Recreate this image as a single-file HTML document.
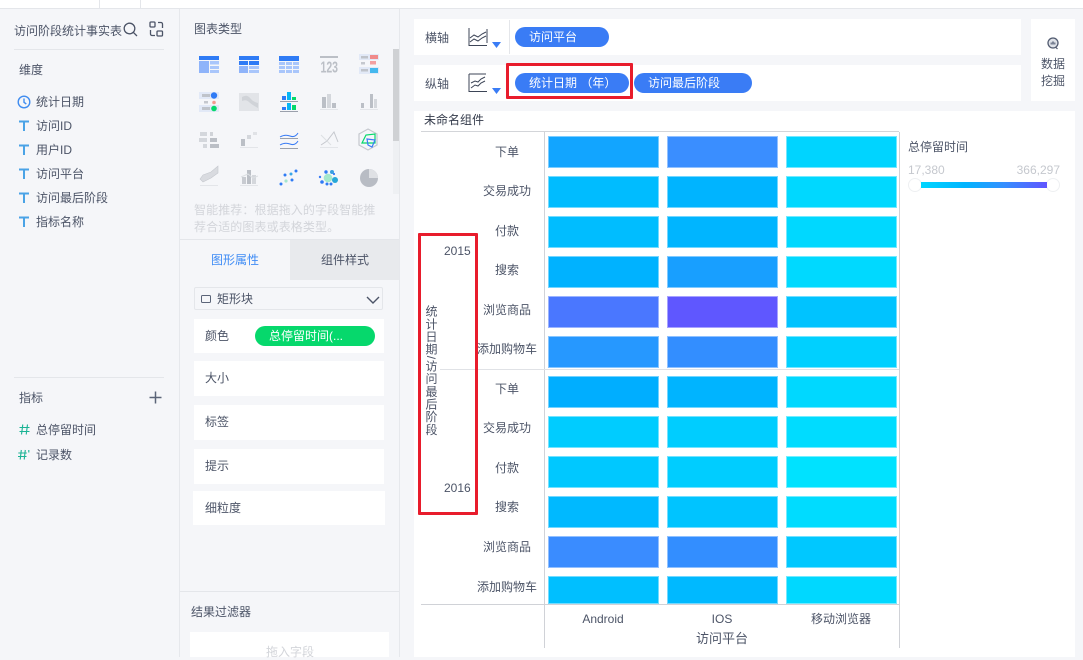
<!DOCTYPE html>
<html lang="zh"><head><meta charset="utf-8"><title>组件</title>
<style>
html,body{margin:0;padding:0}
body{position:relative;width:1083px;height:657px;overflow:hidden;background:#f5f6f9;font-family:"Liberation Sans","Noto Sans CJK SC",sans-serif;font-size:12px;color:#4c5467}
.t{position:absolute;white-space:nowrap;line-height:16px}
.c{position:absolute;white-space:nowrap;line-height:16px;text-align:center;transform:translateX(-50%)}
.b{position:absolute}
.w{position:absolute;background:#fff}
.p{position:absolute;height:20px;line-height:20px;border-radius:10px;background:#3a7cf5;color:#fff;white-space:nowrap;box-sizing:border-box;padding-left:14px}
.h{position:absolute;width:111px;height:32px;box-shadow:inset 0 0 0 1px rgba(255,255,255,.45)}
.x1{left:548px}.x2{left:667px}.x3{left:786px}
svg{position:absolute;overflow:visible}
</style></head><body>
<!-- top strip -->
<div class="w" style="left:0;top:0;width:1083px;height:8px"></div>
<div class="b" style="left:0;top:8px;width:1083px;height:1px;background:#e4e6ea"></div>
<div class="b" style="left:99px;top:0;width:1px;height:8px;background:#e4e6ea"></div>
<div class="b" style="left:140px;top:0;width:1px;height:8px;background:#e4e6ea"></div>

<!-- left panel -->
<div class="b" style="left:179px;top:9px;width:1px;height:648px;background:#e6e8ec"></div>
<span class="t" style="left:14px;top:23px">访问阶段统计事实表</span>
<svg style="left:122px;top:21px" width="16" height="16" viewBox="0 0 16 16" fill="none" stroke="#4c5467" stroke-width="1.3"><circle cx="7.5" cy="7.5" r="5.3"/><path d="M11.4 11.4L15 15"/></svg>
<svg style="left:149px;top:21px" width="15" height="16" viewBox="0 0 15 16" fill="none" stroke="#4c5467" stroke-width="1.3"><rect x="1" y="1" width="5" height="5" rx="1"/><rect x="8" y="10" width="5.5" height="5" rx="1"/><path d="M9 1.5h3a1.5 1.5 0 0 1 1.500 1.500v4M6 14.500H3a1.500 1.500 0 0 1-1.500-1.500V9"/></svg>
<div class="b" style="left:14px;top:49px;width:150px;height:1px;background:#e4e6ea"></div>
<span class="t" style="left:19px;top:62px">维度</span>
<svg style="left:17px;top:95px" width="14" height="14" viewBox="0 0 14 14" fill="none" stroke="#3f8cf0" stroke-width="1.400"><circle cx="7" cy="7" r="5.800"/><path d="M7 3.500V7.300L9.300 9"/></svg>
<span class="t" style="left:36px;top:94px">统计日期</span>
<svg style="left:18px;top:120px" width="12" height="12" viewBox="0 0 12 12"><path d="M1 1.500H11M6 1.500V11" stroke="#4aa3e6" stroke-width="2" fill="none"/></svg>
<span class="t" style="left:36px;top:118px">访问ID</span>
<svg style="left:18px;top:144px" width="12" height="12" viewBox="0 0 12 12"><path d="M1 1.500H11M6 1.500V11" stroke="#4aa3e6" stroke-width="2" fill="none"/></svg>
<span class="t" style="left:36px;top:142px">用户ID</span>
<svg style="left:18px;top:168px" width="12" height="12" viewBox="0 0 12 12"><path d="M1 1.500H11M6 1.500V11" stroke="#4aa3e6" stroke-width="2" fill="none"/></svg>
<span class="t" style="left:36px;top:166px">访问平台</span>
<svg style="left:18px;top:192px" width="12" height="12" viewBox="0 0 12 12"><path d="M1 1.500H11M6 1.500V11" stroke="#4aa3e6" stroke-width="2" fill="none"/></svg>
<span class="t" style="left:36px;top:190px">访问最后阶段</span>
<svg style="left:18px;top:216px" width="12" height="12" viewBox="0 0 12 12"><path d="M1 1.500H11M6 1.500V11" stroke="#4aa3e6" stroke-width="2" fill="none"/></svg>
<span class="t" style="left:36px;top:214px">指标名称</span>
<div class="b" style="left:14px;top:377px;width:150px;height:1px;background:#e4e6ea"></div>
<span class="t" style="left:19px;top:390px">指标</span>
<svg style="left:149px;top:391px" width="13" height="13" viewBox="0 0 13 13"><path d="M6.500 0.500V12.500M0.500 6.500H12.500" stroke="#5b6478" stroke-width="1.500"/></svg>
<svg style="left:19px;top:424px" width="11" height="11" viewBox="0 0 11 11" fill="none" stroke="#1ab394" stroke-width="1.100"><path d="M3.800 0.500L2.500 10.500M8.500 0.500L7.200 10.500M0.500 3.500H10.500M0.500 7.500H10.500"/></svg>
<span class="t" style="left:36px;top:422px">总停留时间</span>
<svg style="left:18px;top:449px" width="12" height="11" viewBox="0 0 12 11" fill="none" stroke="#1ab394" stroke-width="1.100"><path d="M3.300 1L2.200 10.500M7.300 1L6.200 10.500M0.300 4H8.800M0 7.500H8.500M10.800 1V3.500"/></svg>
<span class="t" style="left:36px;top:447px">记录数</span>

<!-- middle panel -->
<div class="b" style="left:399px;top:9px;width:1px;height:648px;background:#e6e8ec"></div>
<span class="t" style="left:194px;top:21px">图表类型</span>
<svg style="left:190px;top:45px" width="200" height="150" viewBox="0 0 200 150">
 <!-- r1 -->
 <rect x="9" y="11" width="20" height="4" fill="#2f7bf5"/><rect x="9" y="16" width="10" height="12" fill="#8fb4fa"/><rect x="20" y="16" width="9" height="3.500" fill="#a9c6fb"/><rect x="20" y="21" width="9" height="3" fill="#a9c6fb"/><rect x="20" y="25" width="9" height="3" fill="#a9c6fb"/>
 <rect x="49" y="11" width="20" height="4" fill="#2f7bf5"/><rect x="49" y="16" width="9" height="4" fill="#2f7bf5"/><rect x="59" y="16" width="10" height="4" fill="#2f7bf5"/><rect x="49" y="21" width="9" height="7" fill="#8fb4fa"/><rect x="59" y="21" width="10" height="3" fill="#a9c6fb"/><rect x="59" y="25" width="10" height="3" fill="#a9c6fb"/>
 <rect x="89" y="11" width="20" height="5" fill="#2f7bf5"/><rect x="89" y="17" width="6" height="3" fill="#a9c6fb"/><rect x="96" y="17" width="6" height="3" fill="#a9c6fb"/><rect x="103" y="17" width="6" height="3" fill="#a9c6fb"/><rect x="89" y="21" width="6" height="3" fill="#a9c6fb"/><rect x="96" y="21" width="6" height="3" fill="#a9c6fb"/><rect x="103" y="21" width="6" height="3" fill="#a9c6fb"/><rect x="89" y="25" width="6" height="3" fill="#a9c6fb"/><rect x="96" y="25" width="6" height="3" fill="#a9c6fb"/><rect x="103" y="25" width="6" height="3" fill="#a9c6fb"/>
 <rect x="130" y="11" width="18" height="2" fill="#bbbfc6"/><text x="130.500" y="27.500" font-size="15.500" font-weight="bold" fill="#bbbfc6" textLength="17.500" lengthAdjust="spacingAndGlyphs" font-family="Liberation Sans Narrow,Liberation Sans,sans-serif">123</text>
 <rect x="169" y="9" width="20" height="6" fill="#e2e9f7"/><rect x="169" y="22" width="20" height="7" fill="#e2e9f7"/><rect x="171" y="11" width="7" height="2.500" fill="#bfc3ca"/><rect x="180" y="10" width="8" height="4" fill="#f08a8a"/><rect x="171" y="17" width="4" height="2.500" fill="#c5c8ce"/><rect x="180" y="16" width="6" height="3.500" fill="#f4a0a0"/><rect x="171" y="24" width="7" height="2.500" fill="#bfc3ca"/><rect x="180" y="23" width="8" height="5" fill="#45b8ee"/>
 <!-- r2 -->
 <rect x="9" y="47" width="20" height="7" fill="#e2e9f7"/><rect x="9" y="60" width="20" height="7" fill="#e2e9f7"/><rect x="12" y="49" width="8" height="3" fill="#bfc3ca"/><circle cx="24" cy="50.500" r="3.200" fill="#2f7bf5"/><rect x="14" y="56" width="4" height="2.500" fill="#c5c8ce"/><circle cx="24" cy="57.500" r="1.800" fill="#f49a90"/><rect x="12" y="62" width="8" height="3" fill="#bfc3ca"/><circle cx="24" cy="63.500" r="2.800" fill="#06d86c"/>
 <rect x="49" y="48" width="20" height="18" fill="#e2e4e8"/><path d="M52 52q5-3 8 1t8 5v5q-6-3-9-6t-7-1z" fill="#d0d3d8"/>
 <rect x="97" y="47" width="4" height="8" fill="#06b6f5"/><rect x="92" y="51" width="4" height="4" fill="#2f7bf5"/><rect x="102" y="52" width="4" height="3" fill="#06d86c"/><rect x="90" y="56" width="18" height="1" fill="#9aa0ac"/><rect x="97" y="58" width="4" height="7" fill="#06b6f5"/><rect x="92" y="62" width="4" height="3" fill="#2f7bf5"/><rect x="102" y="60" width="4" height="5" fill="#06d86c"/><rect x="90" y="66" width="18" height="1" fill="#9aa0ac"/>
 <rect x="132" y="52" width="4" height="11" fill="#bbbfc6"/><rect x="137" y="49" width="4" height="14" fill="#d4d7dc"/><rect x="142" y="58" width="4" height="5" fill="#bbbfc6"/><rect x="130" y="64" width="18" height="1" fill="#e3e5e9"/>
 <rect x="171" y="58" width="3" height="5" fill="#bbbfc6"/><rect x="180" y="49" width="3" height="14" fill="#bbbfc6"/><rect x="184" y="54" width="3" height="9" fill="#d4d7dc"/><rect x="170" y="64" width="18" height="1" fill="#e3e5e9"/>
 <!-- r3 -->
 <rect x="10" y="87" width="7" height="4" fill="#d4d7dc"/><rect x="20" y="87" width="3" height="4" fill="#d0d3d8"/><rect x="9" y="93" width="8" height="4" fill="#d4d7dc"/><rect x="20" y="93" width="7" height="4" fill="#bbbfc6"/><rect x="13" y="99" width="4" height="4" fill="#d4d7dc"/><rect x="20" y="99" width="9" height="4" fill="#bbbfc6"/>
 <rect x="51" y="94" width="4" height="7" fill="#bbbfc6"/><rect x="57" y="90" width="4" height="4" fill="#d4d7dc"/><rect x="63" y="87" width="4" height="3" fill="#e0e2e6"/><rect x="50" y="102" width="18" height="1" fill="#e3e5e9"/>
 <path d="M90 92q5-3 10-1t8-3" stroke="#3a7cf5" fill="none" stroke-width="1"/><rect x="90" y="93" width="18" height="1" fill="#9aa0ac"/><path d="M90 100q5-3 10-1t8-3" stroke="#3a7cf5" fill="none" stroke-width="1"/><rect x="90" y="103" width="18" height="1" fill="#9aa0ac"/>
 <path d="M131 100l6-4 7-9 4 10" stroke="#c5c8ce" fill="none"/><path d="M131 90l6 6 4 4" stroke="#dcdfe3" fill="none"/><rect x="130" y="102" width="18" height="1" fill="#e3e5e9"/>
 <path d="M178 84l9 5v11l-9 5-9-5v-11z" stroke="#c5c8ce" fill="none" stroke-width="1.200"/><path d="M172 98l4-8 9-1 0 9z" stroke="#06d86c" fill="none" stroke-width="1.200"/><path d="M177 94l8 1-3 7-4-2z" stroke="#3a7cf5" fill="none" stroke-width="1.200"/>
 <!-- r4 -->
 <path d="M10 134l3-4 8-3 7-6v7l-7 5-8 4z" fill="#d9dbe0" stroke="#c5c8ce" stroke-width=".6"/><rect x="10" y="140" width="18" height="1" fill="#e3e5e9"/>
 <rect x="52" y="132" width="4" height="7" fill="#c8cbd1"/><rect x="57" y="125" width="4" height="14" fill="#bbbfc6"/><rect x="62" y="130" width="4" height="9" fill="#d4d7dc"/><path d="M51 132l7-3 5 4 5-2" stroke="#dcdfe3" fill="none"/><rect x="50" y="140" width="18" height="1" fill="#e3e5e9"/>
 <circle cx="95" cy="130" r="1.500" fill="#2f7bf5"/><circle cx="101" cy="129" r="1.500" fill="#3aa6e8"/><circle cx="106" cy="126" r="1.500" fill="#2f7bf5"/><circle cx="91" cy="139" r="1.500" fill="#2f7bf5"/><circle cx="96" cy="136" r="1.600" fill="#a6e6cf"/><circle cx="102" cy="135" r="1.500" fill="#2f7bf5"/>
 <circle cx="138" cy="133" r="4.300" fill="#a4e8cc"/><circle cx="136" cy="127" r="1.700" fill="#2f7bf5"/><circle cx="142" cy="127" r="2" fill="#3a9fdf"/><circle cx="130" cy="132" r="1.200" fill="#3a7cf5"/><circle cx="145" cy="135" r="3" fill="#27a8d8"/><circle cx="132" cy="137" r="1.800" fill="#2f7bf5"/><circle cx="137" cy="139" r="1.500" fill="#2f7bf5"/><circle cx="141" cy="139" r="1.500" fill="#2f7bf5"/><circle cx="144" cy="129" r="1.100" fill="#3a7cf5"/>
 <circle cx="179" cy="133" r="9" fill="#b8bcc4"/><path d="M179 124a9 9 0 0 1 9 9h-9z" fill="#dfe1e5"/>
</svg>
<div class="b" style="left:393px;top:49px;width:6px;height:145px;background:#eef0f3"></div>
<div class="b" style="left:393px;top:49px;width:6px;height:92px;background:#cfd1d4"></div>
<span class="t" style="left:194px;top:202px;color:#d3d5da;letter-spacing:0.1px">智能推荐：根据拖入的字段智能推</span>
<span class="t" style="left:194px;top:219px;color:#d3d5da;letter-spacing:0.1px">荐合适的图表或表格类型。</span>
<div class="b" style="left:180px;top:239px;width:219px;height:1px;background:#e4e6ea"></div>
<span class="c" style="left:235px;top:252px;color:#3f8cf5">图形属性</span>
<div class="b" style="left:290px;top:240px;width:109px;height:40px;background:#e8eaed"></div>
<span class="c" style="left:345px;top:252px">组件样式</span>
<div class="b" style="left:194px;top:287px;width:189px;height:23px;box-sizing:border-box;border:1px solid #e4e6ea;border-radius:2px"></div>
<svg style="left:201px;top:295px" width="10" height="8" viewBox="0 0 10 8"><rect x=".5" y=".5" width="9" height="7" rx="1" fill="none" stroke="#5b6478"/></svg>
<span class="t" style="left:217px;top:291px">矩形块</span>
<svg style="left:366px;top:296px" width="14" height="8" viewBox="0 0 14 8"><path d="M1 1L7 7L13 1" fill="none" stroke="#4c5467" stroke-width="1.400"/></svg>
<div class="w" style="left:194px;top:319px;width:190px;height:34px"></div>
<span class="t" style="left:205px;top:328px">颜色</span>
<div class="p" style="left:255px;top:326px;width:120px;background:#06d86c">总停留时间(...</div>
<div class="w" style="left:194px;top:361px;width:190px;height:35px"></div>
<span class="t" style="left:205px;top:370px">大小</span>
<div class="w" style="left:194px;top:405px;width:190px;height:35px"></div>
<span class="t" style="left:205px;top:414px">标签</span>
<div class="w" style="left:194px;top:449px;width:190px;height:35px"></div>
<span class="t" style="left:205px;top:458px">提示</span>
<div class="w" style="left:193px;top:491px;width:192px;height:34px"></div>
<span class="t" style="left:205px;top:500px">细粒度</span>
<div class="b" style="left:180px;top:591px;width:219px;height:1px;background:#e4e6ea"></div>
<span class="t" style="left:191px;top:604px">结果过滤器</span>
<div class="w" style="left:190px;top:632px;width:199px;height:25px"></div>
<span class="c" style="left:290px;top:644px;color:#d3d5da">拖入字段</span>

<!-- axis rows -->
<div class="w" style="left:414px;top:19px;width:607px;height:36px"></div>
<div class="w" style="left:414px;top:65px;width:607px;height:36px"></div>
<div class="w" style="left:1031px;top:19px;width:44px;height:82px"></div>
<div class="b" style="left:509px;top:20px;width:1px;height:34px;background:#e4e6ea"></div>
<span class="t" style="left:425px;top:30px">横轴</span>
<span class="t" style="left:425px;top:76px">纵轴</span>
<svg style="left:468px;top:28px" width="20" height="18" viewBox="0 0 20 18" fill="none" stroke="#3d4557"><path d="M1 0V17.500H19M19 1V15"/><path d="M2 10l4-3 4 2 4-3 4-2" stroke-width="1"/><path d="M2 14l4-3 4 2 4-3 4-2" stroke-width="1"/></svg>
<svg style="left:492px;top:42px" width="9" height="6" viewBox="0 0 9 6"><path d="M0 0H9L4.500 6z" fill="#3a7cf5"/></svg>
<svg style="left:468px;top:74px" width="20" height="18" viewBox="0 0 20 18" fill="none" stroke="#3d4557"><path d="M1 0H18M1 0V17.500H19"/><path d="M3 9l4-2 3 1 3-3 4-2" stroke-width="1"/><path d="M3 14l4-3 3 1 3-3 4-2" stroke-width="1"/></svg>
<svg style="left:492px;top:88px" width="9" height="6" viewBox="0 0 9 6"><path d="M0 0H9L4.500 6z" fill="#3a7cf5"/></svg>
<div class="p" style="left:515px;top:27px;width:94px">访问平台</div>
<div class="p" style="left:515px;top:73px;width:114px">统计日期 （年）</div>
<div class="p" style="left:634px;top:73px;width:118px">访问最后阶段</div>
<div class="b" style="left:506px;top:63px;width:127px;height:36px;box-sizing:border-box;border:3px solid #e81c2c;border-radius:1px"></div>
<svg style="left:1047px;top:37px" width="12" height="13" viewBox="0 0 12 13"><circle cx="6" cy="6" r="5" fill="#dfe2e8" stroke="#525b70" stroke-width="1.300"/><path d="M3.500 7.500V5.500H5V4.500H7V5.500H8.500V7.500z" fill="#7a8294"/><path d="M8.500 10L10.500 12" stroke="#525b70" stroke-width="1.200"/></svg>
<span class="t" style="left:1041px;top:56px">数据</span>
<span class="t" style="left:1041px;top:73px">挖掘</span>

<!-- chart -->
<div class="w" style="left:414px;top:111px;width:661px;height:546px"></div>
<span class="t" style="left:424px;top:112px;color:#333a4a">未命名组件</span>
<div class="b" style="left:421px;top:131px;width:478px;height:1px;background:#d3d5d9"></div>
<div class="b" style="left:544px;top:132px;width:1px;height:516px;background:#d0d2d7"></div>
<div class="b" style="left:899px;top:132px;width:1px;height:516px;background:#d0d2d7"></div>
<div class="b" style="left:440px;top:369px;width:459px;height:1px;background:#e0e2e6"></div>
<div class="b" style="left:421px;top:604px;width:478px;height:1px;background:#d0d2d7"></div>

<div class="h x1" style="top:136px;background:#12a5ff"></div><div class="h x2" style="top:136px;background:#3a8eff"></div><div class="h x3" style="top:136px;background:#00d4ff"></div>
<div class="h x1" style="top:176px;background:#00bcff"></div><div class="h x2" style="top:176px;background:#00b4ff"></div><div class="h x3" style="top:176px;background:#00d8ff"></div>
<div class="h x1" style="top:216px;background:#00bdff"></div><div class="h x2" style="top:216px;background:#00b5ff"></div><div class="h x3" style="top:216px;background:#00d8ff"></div>
<div class="h x1" style="top:256px;background:#00b2ff"></div><div class="h x2" style="top:256px;background:#189fff"></div><div class="h x3" style="top:256px;background:#00d9ff"></div>
<div class="h x1" style="top:296px;background:#4a77ff"></div><div class="h x2" style="top:296px;background:#5f57ff"></div><div class="h x3" style="top:296px;background:#00c3ff"></div>
<div class="h x1" style="top:336px;background:#2698ff"></div><div class="h x2" style="top:336px;background:#338eff"></div><div class="h x3" style="top:336px;background:#00d0ff"></div>
<div class="h x1" style="top:376px;background:#00aeff"></div><div class="h x2" style="top:376px;background:#00b4ff"></div><div class="h x3" style="top:376px;background:#00d8ff"></div>
<div class="h x1" style="top:416px;background:#00ccff"></div><div class="h x2" style="top:416px;background:#00cdff"></div><div class="h x3" style="top:416px;background:#00dcff"></div>
<div class="h x1" style="top:456px;background:#00c8ff"></div><div class="h x2" style="top:456px;background:#00cdff"></div><div class="h x3" style="top:456px;background:#00e2ff"></div>
<div class="h x1" style="top:496px;background:#00b9ff"></div><div class="h x2" style="top:496px;background:#00c4ff"></div><div class="h x3" style="top:496px;background:#00dcff"></div>
<div class="h x1" style="top:536px;background:#3a8cff"></div><div class="h x2" style="top:536px;background:#338eff"></div><div class="h x3" style="top:536px;background:#00c8ff"></div>
<div class="h x1" style="top:576px;height:28px;background:#00bfff"></div><div class="h x2" style="top:576px;height:28px;background:#00b9ff"></div><div class="h x3" style="top:576px;height:28px;background:#00d8ff"></div>

<span class="c" style="left:507px;top:144px">下单</span>
<span class="c" style="left:507px;top:183px">交易成功</span>
<span class="c" style="left:507px;top:223px">付款</span>
<span class="c" style="left:507px;top:262px">搜索</span>
<span class="c" style="left:507px;top:302px">浏览商品</span>
<span class="c" style="left:507px;top:341px">添加购物车</span>
<span class="c" style="left:507px;top:381px">下单</span>
<span class="c" style="left:507px;top:420px">交易成功</span>
<span class="c" style="left:507px;top:460px">付款</span>
<span class="c" style="left:507px;top:499px">搜索</span>
<span class="c" style="left:507px;top:539px">浏览商品</span>
<span class="c" style="left:507px;top:579px">添加购物车</span>

<span class="t" style="left:444px;top:243px">2015</span>
<span class="t" style="left:444px;top:480px">2016</span>
<div class="b" style="left:423px;top:305px;width:16px;line-height:16px;writing-mode:vertical-rl;white-space:nowrap;letter-spacing:.7px">统计日期/访问最后阶段</div>
<div class="b" style="left:418px;top:233px;width:60px;height:282px;box-sizing:border-box;border:3px solid #e81c2c;border-radius:1px"></div>

<span class="c" style="left:603px;top:611px">Android</span>
<span class="c" style="left:722px;top:611px">IOS</span>
<span class="c" style="left:841px;top:611px">移动浏览器</span>
<span class="c" style="left:722px;top:631px;font-size:13px">访问平台</span>

<!-- legend -->
<span class="t" style="left:908px;top:139px">总停留时间</span>
<span class="t" style="left:908px;top:162px;color:#c5c8ce">17,380</span>
<span class="t" style="right:23px;top:162px;color:#c5c8ce">366,297</span>
<div class="b" style="left:908px;top:178px;width:14px;height:14px;border-radius:50%;box-sizing:border-box;border:1px solid #eef0f2;background:#fff"></div>
<div class="b" style="left:1046px;top:178px;width:14px;height:14px;border-radius:50%;box-sizing:border-box;border:1px solid #eef0f2;background:#fff"></div>
<div class="b" style="left:921px;top:182px;width:126px;height:6px;background:linear-gradient(90deg,#00d6ff,#00b4ff 35%,#3390ff 65%,#6055ff)"></div>
</body></html>
